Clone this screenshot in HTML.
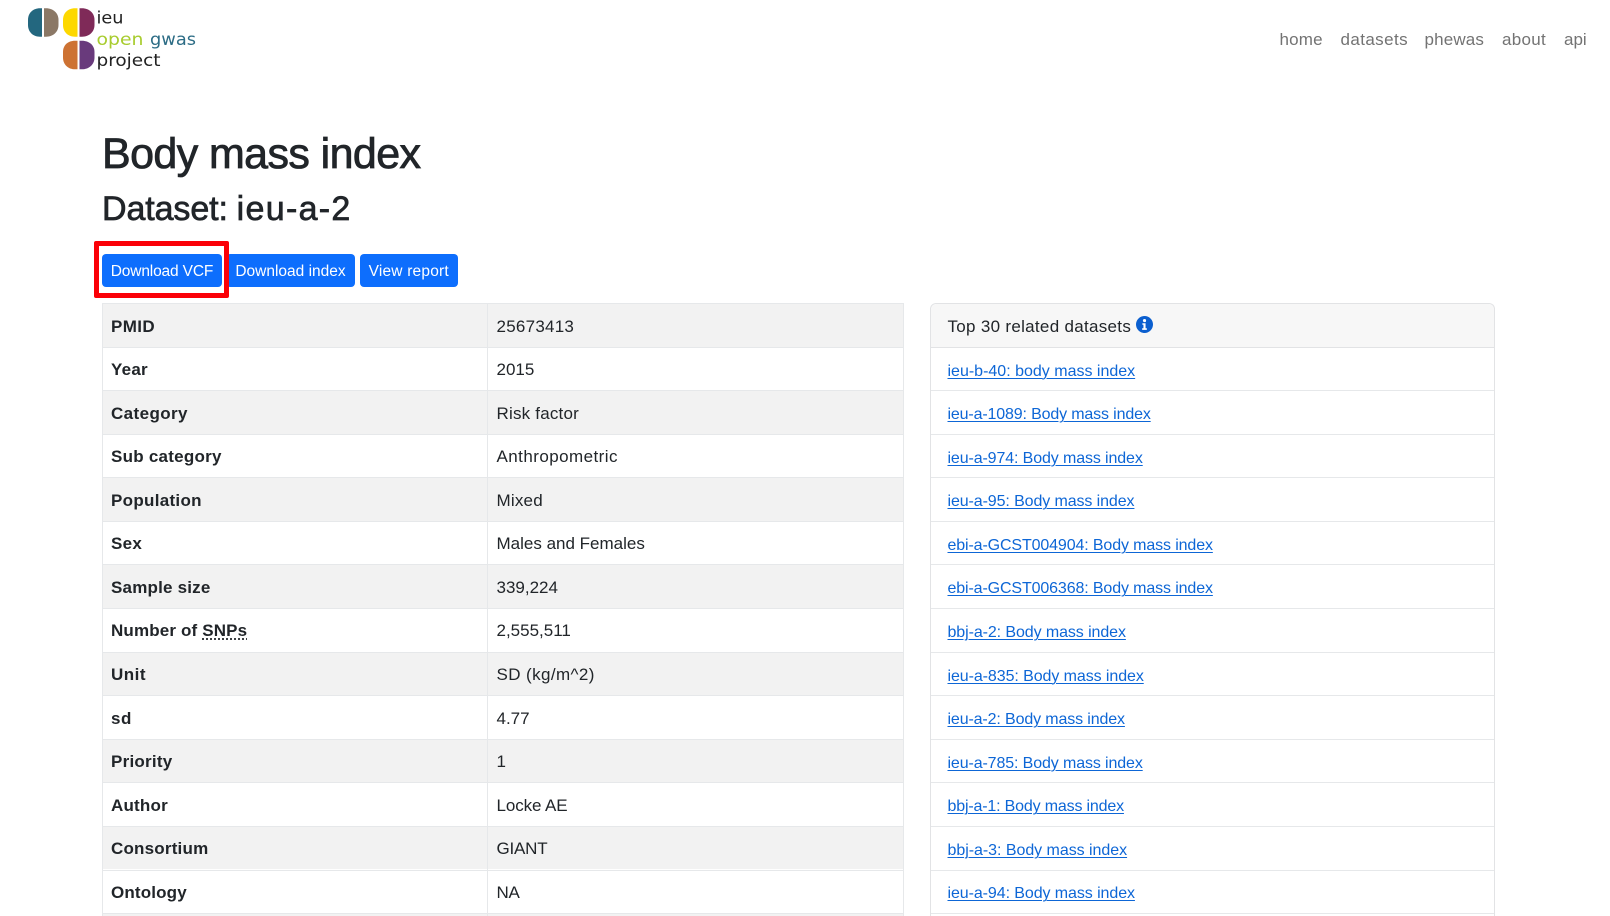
<!DOCTYPE html>
<html lang="en"><head><meta charset="utf-8"><title>Body mass index</title>
<style>
html,body{margin:0;padding:0;background:#fff;width:1610px;height:916px;overflow:hidden;}
#w{position:relative;width:1610px;height:916px;overflow:hidden;font-family:"Liberation Sans",sans-serif;color:#212529;font-size:17px;}
.a{position:absolute;white-space:nowrap;}
.s{position:absolute;left:103px;width:800px;height:43.57px;}
.s.o{background:#f2f2f2;}
.k,.v,.l{position:absolute;white-space:nowrap;line-height:43px;height:43px;}
.k{left:111px;font-weight:700;margin-top:1.5px;}
.v{left:496.5px;margin-top:1.5px;}
.l{left:947.5px;color:#0d66d6;text-decoration:underline;text-underline-offset:2px;text-decoration-thickness:1px;font-size:16px;margin-top:3px;}
.h{position:absolute;background:#e6e8ea;height:1px;}
.n{position:absolute;top:29px;line-height:22px;color:#737373;font-size:17px;}
.b{position:absolute;top:254px;height:33px;line-height:35px;background:#0d6efd;color:#fff;border-radius:4px;text-align:center;font-size:15.5px;}
</style></head><body><div id="w">

<!-- logo -->
<svg class="a" style="left:0;top:0" width="220" height="80" viewBox="0 0 220 80">
<path d="M42 8.300H40C33 8.300 28 13 28 20V25C28 32 33 36.700 40 36.700H42Z" fill="#23677f"/>
<path d="M44 8.300H46C53 8.300 58.500 13 58.500 20V25C58.500 32 53 36.700 46 36.700H44Z" fill="#8b7866"/>
<path d="M77.500 8.300H75C68 8.300 63 13 63 20V25C63 32 68 36.700 75 36.700H77.500Z" fill="#fdd800"/>
<path d="M79.500 8.300H82C89 8.300 94.500 13 94.500 20V25C94.500 32 89 36.700 82 36.700H79.500Z" fill="#7f2a58"/>
<path d="M77.500 40.700H75C68 40.700 63 45 63 52V57.500C63 64.500 68 69.300 75 69.300H77.500Z" fill="#cd7233"/>
<path d="M79.500 40.700H82C89 40.700 94.500 45 94.500 52V57.500C94.500 64.500 89 69.300 82 69.300H79.500Z" fill="#693a7c"/>
<text x="96.500" y="23.500" font-family="DejaVu Sans" font-size="17" fill="#222" textLength="27" lengthAdjust="spacingAndGlyphs">ieu</text>
<text x="96.500" y="45" font-family="DejaVu Sans" font-size="17" fill="#a8cc2e" textLength="47" lengthAdjust="spacingAndGlyphs">open</text>
<text x="150" y="45" font-family="DejaVu Sans" font-size="17" fill="#2c6c85" textLength="46" lengthAdjust="spacingAndGlyphs">gwas</text>
<text x="96.500" y="66" font-family="DejaVu Sans" font-size="17" fill="#222" textLength="64" lengthAdjust="spacingAndGlyphs">project</text>
</svg>

<!-- nav -->
<div class="n" style="left:1279.500px;letter-spacing:.2px">home</div>
<div class="n" style="left:1340.500px;letter-spacing:.4px">datasets</div>
<div class="n" style="left:1424.500px;letter-spacing:.15px">phewas</div>
<div class="n" style="left:1502px;letter-spacing:.3px">about</div>
<div class="n" style="left:1564px">api</div>

<!-- headings -->
<div class="a" style="left:102px;top:129px;font-size:43px;line-height:50px;letter-spacing:-.6px;-webkit-text-stroke:.8px #212529;">Body mass index</div>
<div class="a" style="left:102px;top:189px;font-size:34px;line-height:40px;letter-spacing:-.1px;word-spacing:-.5px;-webkit-text-stroke:.7px #212529;">Dataset: <span style="letter-spacing:1.3px">ieu-a-2</span></div>

<!-- buttons -->
<div class="b" style="left:226px;width:129px;">Download index</div>
<div class="b" style="left:102px;width:120px;z-index:2;letter-spacing:-.15px">Download VCF</div>
<div class="b" style="left:359.500px;width:98.500px;letter-spacing:.2px">View report</div>
<div class="a" style="left:94px;top:241px;width:125px;height:47px;border:5px solid #fb0007;border-radius:2px;z-index:3;"></div>

<!-- table stripes -->
<div class="s o" style="top:303px"></div>
<div class="s o" style="top:390.14px"></div>
<div class="s o" style="top:477.28px"></div>
<div class="s o" style="top:564.42px"></div>
<div class="s o" style="top:651.56px"></div>
<div class="s o" style="top:738.7px"></div>
<div class="s o" style="top:825.84px"></div>
<div class="s o" style="top:913px;height:3px"></div>
<!-- table lines -->
<div class="a" style="left:102px;top:303px;width:1px;height:613px;background:#e6e8ea"></div>
<div class="a" style="left:487px;top:303px;width:1px;height:613px;background:#e6e8ea"></div>
<div class="a" style="left:903px;top:303px;width:1px;height:613px;background:#e6e8ea"></div>
<div class="h" style="left:102px;width:802px;top:303px"></div>
<div class="h" style="left:102px;width:802px;top:347px"></div>
<div class="h" style="left:102px;width:802px;top:390px"></div>
<div class="h" style="left:102px;width:802px;top:434px"></div>
<div class="h" style="left:102px;width:802px;top:477px"></div>
<div class="h" style="left:102px;width:802px;top:521px"></div>
<div class="h" style="left:102px;width:802px;top:564px"></div>
<div class="h" style="left:102px;width:802px;top:608px"></div>
<div class="h" style="left:102px;width:802px;top:652px"></div>
<div class="h" style="left:102px;width:802px;top:695px"></div>
<div class="h" style="left:102px;width:802px;top:739px"></div>
<div class="h" style="left:102px;width:802px;top:782px"></div>
<div class="h" style="left:102px;width:802px;top:826px"></div>
<div class="h" style="left:102px;width:802px;top:870px"></div>
<div class="h" style="left:102px;width:802px;top:913px"></div>

<div class="k" style="top:303px;letter-spacing:.4px">PMID</div><div class="v" style="top:303px;letter-spacing:.25px">25673413</div>
<div class="k" style="top:346.57px;letter-spacing:.25px">Year</div><div class="v" style="top:346.57px">2015</div>
<div class="k" style="top:390.14px;letter-spacing:.4px">Category</div><div class="v" style="top:390.14px;letter-spacing:.2px">Risk factor</div>
<div class="k" style="top:433.71px;letter-spacing:.25px">Sub category</div><div class="v" style="top:433.71px;letter-spacing:.44px">Anthropometric</div>
<div class="k" style="top:477.28px;letter-spacing:.3px">Population</div><div class="v" style="top:477.28px;letter-spacing:.2px">Mixed</div>
<div class="k" style="top:520.85px;letter-spacing:.3px">Sex</div><div class="v" style="top:520.85px">Males and Females</div>
<div class="k" style="top:564.42px;letter-spacing:.2px">Sample size</div><div class="v" style="top:564.42px">339,224</div>
<div class="k" style="top:607.99px;letter-spacing:.15px">Number of <span style="text-decoration:underline dotted;text-underline-offset:2px">SNPs</span></div><div class="v" style="top:607.99px">2,555,511</div>
<div class="k" style="top:651.56px;letter-spacing:.5px">Unit</div><div class="v" style="top:651.56px;letter-spacing:.4px">SD (kg/m^2)</div>
<div class="k" style="top:695.13px;letter-spacing:.5px">sd</div><div class="v" style="top:695.13px">4.77</div>
<div class="k" style="top:738.7px;letter-spacing:.25px">Priority</div><div class="v" style="top:738.7px">1</div>
<div class="k" style="top:782.27px;letter-spacing:.2px">Author</div><div class="v" style="top:782.27px;letter-spacing:-.1px">Locke AE</div>
<div class="k" style="top:825.84px;letter-spacing:.2px">Consortium</div><div class="v" style="top:825.84px;letter-spacing:-.2px">GIANT</div>
<div class="k" style="top:869.41px;letter-spacing:.15px">Ontology</div><div class="v" style="top:869.41px;letter-spacing:-.3px">NA</div>

<!-- card -->
<div class="a" style="left:930px;top:303px;width:563px;height:613px;box-sizing:content-box;border:1px solid #e2e3e5;border-bottom:0;border-radius:6px 6px 0 0;"></div>
<div class="a" style="left:931px;top:304px;width:563px;height:43px;background:#f7f7f7;border-radius:6px 6px 0 0;border-bottom:1px solid #e2e3e5;"></div>
<div class="a" style="left:947.500px;top:305px;line-height:43px;letter-spacing:.3px">Top 30 related datasets</div>
<svg class="a" style="left:1136px;top:316px" width="17" height="17" viewBox="0 0 16 16"><circle cx="8" cy="8" r="8" fill="#0b5fcf"/><circle cx="8" cy="4.300" r="1.500" fill="#fff"/><path d="M6 6.800H9V11.500H10.200V13H5.800V11.500H7V8.200H6Z" fill="#fff"/></svg>
<div class="h" style="left:931px;width:563px;top:390px"></div>
<div class="h" style="left:931px;width:563px;top:434px"></div>
<div class="h" style="left:931px;width:563px;top:477px"></div>
<div class="h" style="left:931px;width:563px;top:521px"></div>
<div class="h" style="left:931px;width:563px;top:564px"></div>
<div class="h" style="left:931px;width:563px;top:608px"></div>
<div class="h" style="left:931px;width:563px;top:652px"></div>
<div class="h" style="left:931px;width:563px;top:695px"></div>
<div class="h" style="left:931px;width:563px;top:739px"></div>
<div class="h" style="left:931px;width:563px;top:782px"></div>
<div class="h" style="left:931px;width:563px;top:826px"></div>
<div class="h" style="left:931px;width:563px;top:870px"></div>
<div class="h" style="left:931px;width:563px;top:913px"></div>

<div class="l" style="top:346.57px">ieu-b-40: body mass index</div>
<div class="l" style="top:390.14px;letter-spacing:-.15px">ieu-a-1089: Body mass index</div>
<div class="l" style="top:433.71px;letter-spacing:-.12px">ieu-a-974: Body mass index</div>
<div class="l" style="top:477.28px;letter-spacing:-.1px">ieu-a-95: Body mass index</div>
<div class="l" style="top:520.85px;letter-spacing:-.125px">ebi-a-GCST004904: Body mass index</div>
<div class="l" style="top:564.42px;letter-spacing:-.125px">ebi-a-GCST006368: Body mass index</div>
<div class="l" style="top:607.99px;letter-spacing:-.09px">bbj-a-2: Body mass index</div>
<div class="l" style="top:651.56px;letter-spacing:-.08px">ieu-a-835: Body mass index</div>
<div class="l" style="top:695.13px;letter-spacing:-.13px">ieu-a-2: Body mass index</div>
<div class="l" style="top:738.7px;letter-spacing:-.12px">ieu-a-785: Body mass index</div>
<div class="l" style="top:782.27px;letter-spacing:-.17px">bbj-a-1: Body mass index</div>
<div class="l" style="top:825.84px;letter-spacing:-.04px">bbj-a-3: Body mass index</div>
<div class="l" style="top:869.41px;letter-spacing:-.08px">ieu-a-94: Body mass index</div>
</div></body></html>
